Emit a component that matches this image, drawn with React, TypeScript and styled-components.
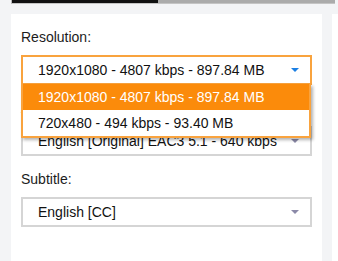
import React from 'react';
import styled, { createGlobalStyle } from 'styled-components';

const ORANGE = '#fb8b0b';
const ORANGE_BORDER = '#f9a33e';
const GRAY_BORDER = '#d5d5d5';

interface Option {
  label: string;
}

interface FieldProps {
  title: string;
  value: string;
  options?: Option[];
  selected?: number;
}

const Arrow = ({ active }: { active?: boolean }) => (
  <ArrowSvg width="8" height="4" viewBox="0 0 8 4">
    <path d="M0 0 H8 L4 4 Z" fill={active ? '#1b7fe3' : '#8b89a8'} />
  </ArrowSvg>
);

const Field = (props: FieldProps) => {
  const { title, value, options, selected } = props;
  const open = !!options;
  return (
    <FieldWrap>
      <Label>{title}</Label>
      <SelectBox open={open}>
        <Value>{value}</Value>
        <Arrow active={open} />
        {open && (
          <Dropdown>
            {options!.map((o, i) => (
              <Item key={o.label} active={i === selected}>
                {o.label}
              </Item>
            ))}
          </Dropdown>
        )}
      </SelectBox>
    </FieldWrap>
  );
};

const App = () => {
  return (
    <>
      <GlobalStyle />
      <Page>
        <Strip>
          <Played />
        </Strip>
        <Columns>
          <Panel>
            <Field
              title="Resolution:"
              value="1920x1080 - 4807 kbps - 897.84 MB"
              options={[
                { label: '1920x1080 - 4807 kbps - 897.84 MB' },
                { label: '720x480 - 494 kbps - 93.40 MB' },
              ]}
              selected={0}
            />
            <Field title="Audio:" value="English [Original] EAC3 5.1 - 640 kbps" />
            <Field title="Subtitle:" value="English [CC]" />
          </Panel>
          <SidePanel />
        </Columns>
      </Page>
    </>
  );
};

export default App;

const GlobalStyle = createGlobalStyle`
  body {
    margin: 0;
    background: #f3f4f6;
    font-family: "Liberation Sans", Arial, sans-serif;
    overflow: hidden;
  }
`;

const Page = styled.div`
  padding-left: 11px;
  width: 338px;
  height: 261px;
  box-sizing: border-box;
  overflow: hidden;
`;

const Strip = styled.div`
  width: 323px;
  height: 3px;
  background: #ababab;
  border-bottom: 1px solid #c4c4c4;
  border-left: 1px solid #b8b8b8;
  box-sizing: content-box;
  display: flex;
`;

const Played = styled.div`
  width: 146px;
  height: 3px;
  background: #111;
`;

const Columns = styled.div`
  display: flex;
  gap: 10px;
  margin-top: 10px;
`;

const Panel = styled.div`
  width: 311px;
  flex-shrink: 0;
  height: 260px;
  background: #fff;
  padding: 15px 10px 0;
  box-sizing: border-box;
`;

const SidePanel = styled.div`
  width: 40px;
  flex-shrink: 0;
  height: 260px;
  background: #fff;
`;

const FieldWrap = styled.div`
  margin-bottom: 15px;
`;

const Label = styled.div`
  font-size: 14px;
  line-height: 16px;
  color: #1c1c1c;
  margin-bottom: 10px;
`;

const SelectBox = styled.div<{ open?: boolean }>`
  position: relative;
  height: 30px;
  box-sizing: border-box;
  border: 2px solid ${(p) => (p.open ? ORANGE_BORDER : GRAY_BORDER)};
  background: #fff;
  display: flex;
  align-items: center;
  padding: 0 11px 0 15px;
  z-index: ${(p) => (p.open ? 2 : 1)};
`;

const Value = styled.span`
  flex: 1;
  font-size: 14px;
  color: #111;
  white-space: nowrap;
`;

const ArrowSvg = styled.svg`
  display: block;
  flex-shrink: 0;
`;

const Dropdown = styled.div`
  position: absolute;
  top: calc(100% + 1px);
  left: -2px;
  right: -1px;
  border: 2px solid ${ORANGE_BORDER};
  border-top: none;
  background: #fff;
  box-shadow: 2px 2px 3px rgba(0, 0, 0, 0.3);
`;

const Item = styled.div<{ active?: boolean }>`
  height: 26px;
  display: flex;
  align-items: center;
  padding-left: 15px;
  font-size: 14px;
  white-space: nowrap;
  background: ${(p) => (p.active ? ORANGE : '#fff')};
  color: ${(p) => (p.active ? '#fff' : '#111')};
`;
